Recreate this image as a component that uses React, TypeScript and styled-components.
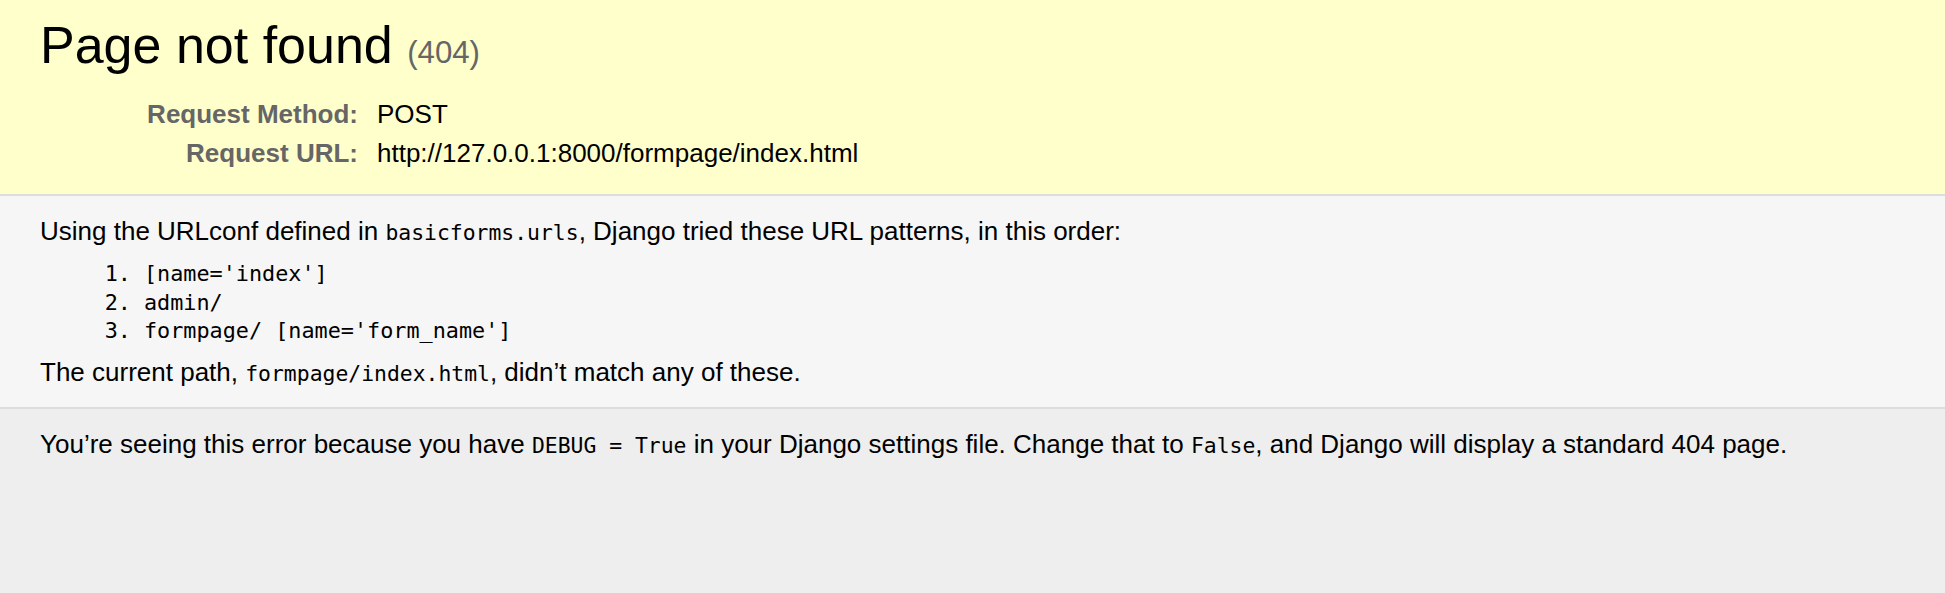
import React from "react";
import styled, { createGlobalStyle } from "styled-components";

const GlobalStyle = createGlobalStyle`
  html, body {
    margin: 0;
    padding: 0;
    background: #eee;
  }
  body {
    font-family: "Liberation Sans", Arial, sans-serif;
    font-size: 26px;
    line-height: 30px;
    color: #000;
  }
`;

const Page = styled.div`
  display: flex;
  flex-direction: column;
  min-height: 100vh;
  background: #eee;
`;

const Section = styled.div<{ $tone: "summary" | "info" | "explanation" }>`
  padding: ${(p) => (p.$tone === "summary" ? "15px 40px 21px" : "20px 40px")};
  background: ${(p) =>
    p.$tone === "summary" ? "#ffc" : p.$tone === "info" ? "#f6f6f6" : "#eee"};
  border-bottom: ${(p) => (p.$tone === "explanation" ? "none" : "2px solid #ddd")};
`;

const Title = styled.h1`
  margin: 0 0 20px;
  font-size: 52px;
  line-height: 60px;
  font-weight: normal;
`;

const Status = styled.span`
  font-size: 60%;
  line-height: 1;
  color: #666;
  font-weight: normal;
`;

const MetaTable = styled.table`
  border: none;
  border-collapse: collapse;
  width: 100%;
`;

const MetaLabel = styled.th`
  width: 312px;
  text-align: right;
  vertical-align: top;
  color: #666;
  font-weight: bold;
  padding: 4px 13px 4px 6px;
  line-height: 31px;
`;

const MetaValue = styled.td`
  vertical-align: top;
  padding: 4px 6px;
  line-height: 31px;
`;

const Text = styled.p`
  margin: 0;
`;

const Code = styled.code`
  font-family: "DejaVu Sans Mono", "Liberation Mono", monospace;
  font-size: 21.4px;
  line-height: 1;
`;

const PatternList = styled.ol`
  margin: 14px 104px 11px;
  padding: 0;
  list-style: decimal;
`;

const Pattern = styled.li`
  font-family: "DejaVu Sans Mono", "Liberation Mono", monospace;
  font-size: 21.8px;
  line-height: 28.5px;
  white-space: pre;
`;

const patterns = ["[name='index']", "admin/", "formpage/ [name='form_name']"];

export default function App() {
  return (
    <>
      <GlobalStyle />
      <Page>
        <Section $tone="summary">
          <Title>
            Page not found <Status>(404)</Status>
          </Title>
          <MetaTable>
            <tbody>
              <tr>
                <MetaLabel>Request Method:</MetaLabel>
                <MetaValue>POST</MetaValue>
              </tr>
              <tr>
                <MetaLabel>Request URL:</MetaLabel>
                <MetaValue>http://127.0.0.1:8000/formpage/index.html</MetaValue>
              </tr>
            </tbody>
          </MetaTable>
        </Section>
        <Section $tone="info">
          <Text>
            Using the URLconf defined in <Code>basicforms.urls</Code>, Django tried these URL
            patterns, in this order:
          </Text>
          <PatternList>
            {patterns.map((p) => (
              <Pattern key={p}>{p}</Pattern>
            ))}
          </PatternList>
          <Text>
            The current path, <Code>formpage/index.html</Code>, didn’t match any of these.
          </Text>
        </Section>
        <Section $tone="explanation">
          <Text>
            You’re seeing this error because you have <Code>DEBUG = True</Code> in your Django
            settings file. Change that to <Code>False</Code>, and Django will display a standard
            404 page.
          </Text>
        </Section>
      </Page>
    </>
  );
}
